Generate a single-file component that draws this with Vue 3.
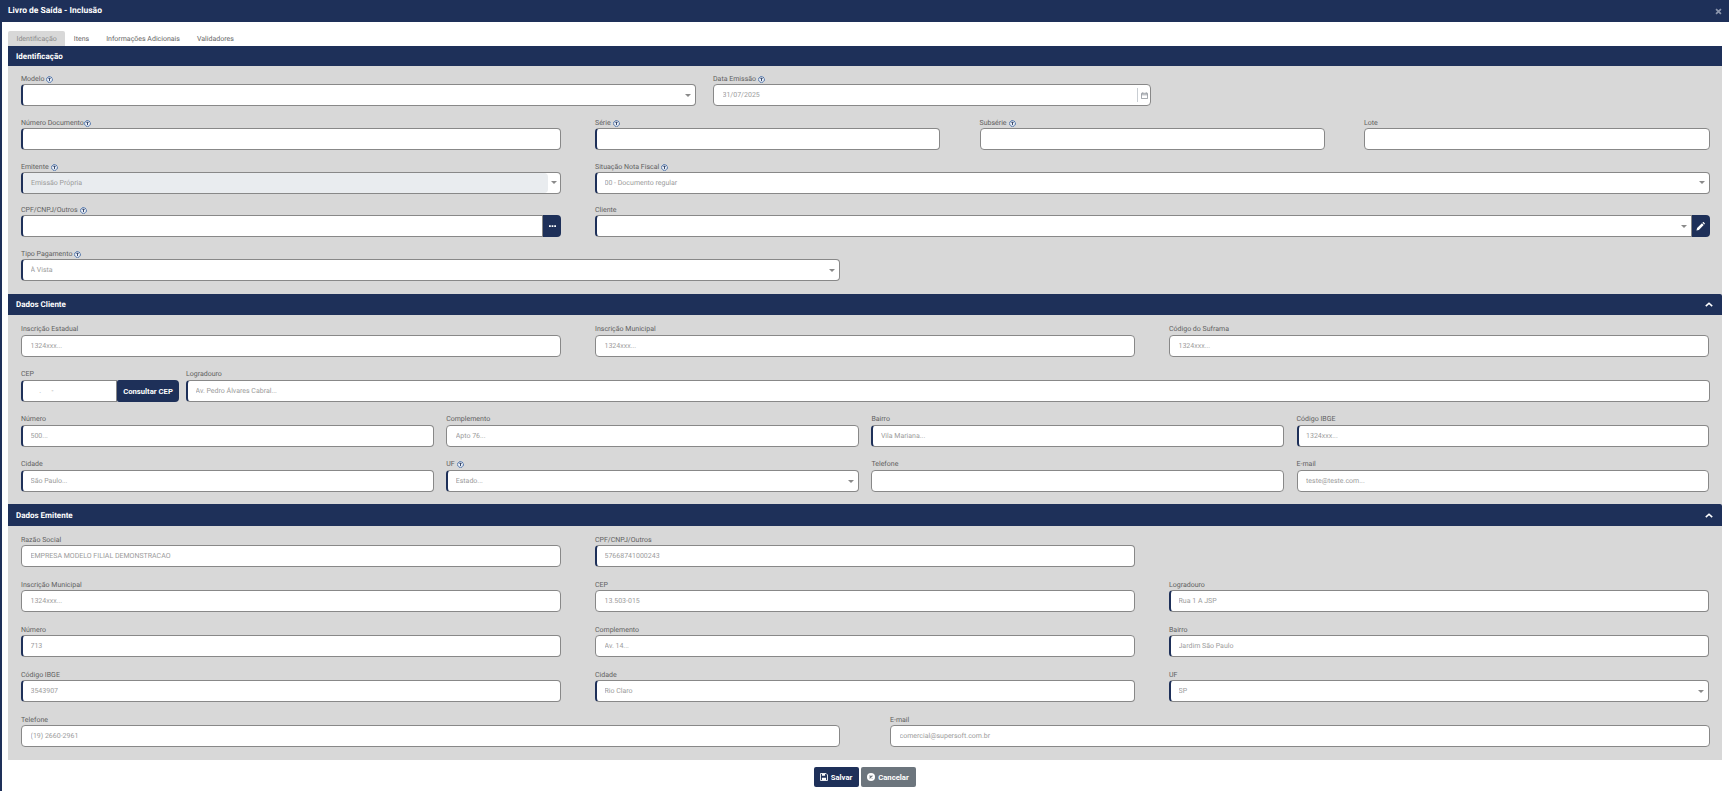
<script setup>
const f = (label, opts = {}) => ({ label, ...opts })
const sections = [
  {
    title: 'Identificação', cls: 'sec-a', collapsible: false,
    rows: [
      { cls: 'r-model', fields: [
        f('Modelo', { info: true, accent: true, kind: 'select' }),
        f('Data Emissão', { info: true, value: '31/07/2025', kind: 'date' })
      ] },
      { cls: 'r-doc', fields: [
        f('Número Documento', { info: true, tight: true, accent: true }),
        f('Série', { info: true, accent: true }),
        f('Subsérie', { info: true }),
        f('Lote')
      ] },
      { cls: 'r-wide', fields: [
        f('Emitente', { info: true, accent: true, kind: 'select', disabled: true, value: 'Emissão Própria' }),
        f('Situação Nota Fiscal', { info: true, accent: true, kind: 'select', value: '00 - Documento regular' })
      ] },
      { cls: 'r-wide', fields: [
        f('CPF/CNPJ/Outros', { info: true, accent: true, addon: 'dots' }),
        f('Cliente', { accent: true, kind: 'select', addon: 'pencil' })
      ] },
      { cls: 'r-half', fields: [
        f('Tipo Pagamento', { info: true, accent: true, kind: 'select', value: 'À Vista' })
      ] }
    ]
  },
  {
    title: 'Dados Cliente', cls: 'sec-b', collapsible: true,
    rows: [
      { cls: 'r-3', fields: [
        f('Inscrição Estadual', { value: '1324xxx...' }),
        f('Inscrição Municipal', { value: '1324xxx...' }),
        f('Código do Suframa', { value: '1324xxx...' })
      ] },
      { cls: 'r-cep', fields: [
        f('CEP', { value: '     .      -', accent: true, addon: 'cep' }),
        f('Logradouro', { accent: true, value: 'Av. Pedro Álvares Cabral...' })
      ] },
      { cls: 'r-4', fields: [
        f('Número', { accent: true, value: '500...' }),
        f('Complemento', { value: 'Apto 76...' }),
        f('Bairro', { accent: true, value: 'Vila Mariana...' }),
        f('Código IBGE', { accent: true, value: '1324xxx...' })
      ] },
      { cls: 'r-4', fields: [
        f('Cidade', { accent: true, value: 'São Paulo...' }),
        f('UF', { info: true, accent: true, kind: 'select', value: 'Estado...' }),
        f('Telefone'),
        f('E-mail', { value: 'teste@teste.com...' })
      ] }
    ]
  },
  {
    title: 'Dados Emitente', cls: 'sec-c', collapsible: true,
    rows: [
      { cls: 'r-3', fields: [
        f('Razão Social', { value: 'EMPRESA MODELO FILIAL DEMONSTRACAO' }),
        f('CPF/CNPJ/Outros', { accent: true, value: '57668741000243' })
      ] },
      { cls: 'r-3', fields: [
        f('Inscrição Municipal', { value: '1324xxx...' }),
        f('CEP', { value: '13.503-015' }),
        f('Logradouro', { accent: true, value: 'Rua 1 A JSP' })
      ] },
      { cls: 'r-3', fields: [
        f('Número', { accent: true, value: '713' }),
        f('Complemento', { value: 'Av. 14...' }),
        f('Bairro', { accent: true, value: 'Jardim São Paulo' })
      ] },
      { cls: 'r-3', fields: [
        f('Código IBGE', { accent: true, value: '3543907' }),
        f('Cidade', { accent: true, value: 'Rio Claro' }),
        f('UF', { accent: true, kind: 'select', value: 'SP' })
      ] },
      { cls: 'r-contact', fields: [
        f('Telefone', { value: '(19) 2660-2961' }),
        f('E-mail', { value: 'comercial@supersoft.com.br' })
      ] }
    ]
  }
]
const tabs = ['Identificação', 'Itens', 'Informações Adicionais', 'Validadores']
</script>

<template>
  <div class="modal">
    <header class="title-bar">
      <span class="title">Livro de Saída - Inclusão</span>
      <svg class="close" viewBox="0 0 10 10" width="7" height="7"><path d="M1.5 1.5l7 7M8.5 1.5l-7 7" stroke="#8d97ad" stroke-width="2.4" fill="none"/></svg>
    </header>

    <nav class="tabs">
      <span v-for="(t, i) in tabs" :key="t" class="tab" :class="{ active: i === 0 }">{{ t }}</span>
    </nav>

    <main class="panel">
      <section v-for="s in sections" :key="s.title" :class="s.cls">
        <div class="sec-head" :class="{ round: s.collapsible }">
          <span>{{ s.title }}</span>
          <svg v-if="s.collapsible" class="chev" viewBox="0 0 10 6" width="8" height="5"><path d="M1 5l4-3.6L9 5" stroke="#fff" stroke-width="2" fill="none"/></svg>
        </div>
        <div class="sec-body">
          <div v-for="(r, ri) in s.rows" :key="ri" class="row" :class="r.cls">
            <div v-for="fl in r.fields" :key="fl.label" class="field">
              <label class="lbl">
                {{ fl.label }}<svg v-if="fl.info" class="info" :class="{ tight: fl.tight }" viewBox="0 0 8 8" width="7" height="7"><circle cx="4" cy="4" r="3.3" fill="#eef2f7" stroke="#1f4f96" stroke-width="1" stroke-dasharray="2.2 0.5"/><path d="M2.6 2.6h2.8M4 2.6v3.2" stroke="#1e3059" stroke-width="1" fill="none"/></svg>
              </label>
              <div class="ctl" :class="{ 'has-addon': fl.addon }">
                <div class="box" :class="{ accent: fl.accent, disabled: fl.disabled, closed: fl.addon }">
                  <span class="val" :class="{ fill: fl.disabled }">{{ fl.value }}</span>
                  <span v-if="fl.kind === 'select'" class="caret"></span>
                  <template v-if="fl.kind === 'date'">
                    <span class="sep"></span>
                    <svg class="cal" viewBox="0 0 8 8" width="7" height="7"><path d="M.5 1.5h7v6h-7zM.5 3.2h7M2 .3v1.6M6 .3v1.6" stroke="#8a8f96" stroke-width=".9" fill="none"/></svg>
                  </template>
                </div>
                <button v-if="fl.addon === 'dots'" class="addon narrow" type="button">
                  <svg viewBox="0 0 8 2" width="7" height="2"><path d="M0 0h2v2H0zM3 0h2v2H3zM6 0h2v2H6z" fill="#fff"/></svg>
                </button>
                <button v-if="fl.addon === 'pencil'" class="addon narrow" type="button">
                  <svg viewBox="0 0 10 10" width="9" height="9"><path d="M6.6 1.4l2 2-5.4 5.4-2.7.7.7-2.7zM7.2.8l.5-.5c.3-.3.7-.3 1 0l1 1c.3.3.3.7 0 1l-.5.5z" fill="#fff"/></svg>
                </button>
                <button v-if="fl.addon === 'cep'" class="addon cep" type="button">Consultar CEP</button>
              </div>
            </div>
          </div>
        </div>
      </section>
    </main>

    <footer class="actions">
      <button class="btn save" type="button">
        <svg viewBox="0 0 10 10" width="8" height="8"><path d="M.6.6h7l1.8 1.8v7H.6z" fill="none" stroke="#fff" stroke-width="1.1"/><path d="M2.4 1h4v2.4h-4zM2.4 6h5.2v3H2.4z" fill="#fff"/></svg>
        Salvar
      </button>
      <button class="btn cancel" type="button">
        <svg viewBox="0 0 10 10" width="8" height="8"><circle cx="5" cy="5" r="5" fill="#fff"/><path d="M3.2 3.2l3.6 3.6M6.8 3.2L3.2 6.8" stroke="#6c757d" stroke-width="1.4"/></svg>
        Cancelar
      </button>
    </footer>
  </div>
</template>

<style>
html, body { margin: 0; background: #fff; }
</style>

<style scoped>
.modal {
  width: 1729px;
  height: 791px;
  box-sizing: border-box;
  border-left: 2px solid #1e3059;
  background: #fff;
  font-family: Roboto, "Liberation Sans", sans-serif;
  text-rendering: geometricPrecision;
  overflow: hidden;
}
.title-bar {
  height: 22px;
  margin-left: -2px;
  background: #1e3059;
  display: flex;
  align-items: center;
  justify-content: space-between;
  padding: 0 8px;
  color: #fff;
}
.title { font-size: 8.5px; font-weight: 700; }
.close { margin-right: -1px; }
.tabs {
  height: 24px;
  box-sizing: border-box;
  padding: 9px 0 0 6px;
  display: flex;
}
.tab {
  height: 15px;
  padding: 0 8.5px;
  font-size: 7px;
  line-height: 16px;
  color: #666;
  white-space: nowrap;
}
.tab.active { background: #d8d8d8; color: #8a8a8a; border-radius: 2px 2px 0 0; }
.panel {
  width: 1714px;
  margin-left: 6px;
  background: #d8d8d8;
}
.sec-head {
  height: 20px;
  background: #1e3059;
  color: #fff;
  font-size: 8px;
  font-weight: 700;
  display: flex;
  align-items: center;
  justify-content: space-between;
  padding: 0 9px 0 8px;
}
.sec-head.round { border-radius: 0 2px 0 0; height: 21px; }
.sec-body {
  padding: 7px 12.5px 13px 13px;
  display: flex;
  flex-direction: column;
}
.sec-a .sec-body { row-gap: 10.75px; }
.sec-c .sec-head { height: 22px; }
.sec-b .sec-body { padding-top: 9px; padding-bottom: 12px; row-gap: 12px; }
.sec-c .sec-body { padding-top: 8px; padding-bottom: 13px; row-gap: 12px; }
.row { display: flex; }
.field { min-width: 0; }
.lbl {
  display: flex;
  align-items: center;
  box-sizing: border-box;
  height: 11px;
  font-size: 7px;
  line-height: 11px;
  color: #5f5f5f;
  white-space: pre;
}
.sec-a .lbl { padding-top: 2px; }
.sec-c .lbl { padding-top: 1px; }
.info { margin-left: 2px; flex: none; }
.info.tight { margin-left: 0; }
.ctl { display: flex; height: 22px; }
.box {
  flex: 1;
  min-width: 0;
  box-sizing: border-box;
  height: 22px;
  display: flex;
  align-items: center;
  background: #fff;
  border: 1px solid #888;
  border-radius: 4px;
  padding-left: 8.5px;
  font-size: 7px;
  color: #9b9b9b;
}
.box.accent { border-left: 2px solid #1e3059; padding-left: 7.5px; }
.box.closed { border-radius: 4px 0 0 4px; }
.val { flex: 1; white-space: pre; overflow: hidden; }
.box.disabled { padding-left: 0; padding-right: 0; overflow: hidden; }
.val.fill {
  align-self: stretch;
  display: flex;
  align-items: center;
  padding-left: 8px;
  background: #e9ecef;
  margin-right: 13px;
  border-radius: 0 4px 4px 0;
}
.caret {
  flex: none;
  width: 0;
  height: 0;
  margin-right: 4px;
  border-left: 3px solid transparent;
  border-right: 3px solid transparent;
  border-top: 3px solid #8a8a8a;
}
.box.disabled .caret { margin-left: -10px; margin-right: 3px; }
.sep { width: 1px; align-self: stretch; margin: 3px 0; background: #c9ced3; }
.cal { margin: 0 2px 0 3px; }
.addon {
  flex: none;
  border: 0;
  padding: 0;
  background: #1e3059;
  color: #fff;
  border-radius: 0 4px 4px 0;
  display: flex;
  align-items: center;
  justify-content: center;
}
.addon.narrow { width: 18px; }
.addon.cep {
  width: 62px;
  border-radius: 2px 4px 4px 2px;
  font: 700 7.7px Roboto, "Liberation Sans", sans-serif;
  white-space: nowrap;
}

.r-model .field:nth-child(1) { width: 675px; margin-right: 17px; }
.r-model .field:nth-child(2) { width: 438px; }
.r-doc .field:nth-child(1) { width: 540px; margin-right: 34px; }
.r-doc .field:nth-child(2), .r-doc .field:nth-child(3) { width: 345px; margin-right: 39.5px; }
.r-doc .field:nth-child(4) { flex: 1; }
.r-wide .field:nth-child(1) { width: 540px; margin-right: 34px; }
.r-wide .field:nth-child(2) { flex: 1; }
.r-half .field { width: 819px; }
.r-3 { column-gap: 34.5px; }
.r-3 .field { width: 539.5px; }
.r-cep { column-gap: 7px; }
.r-cep .field:nth-child(1) { width: 158px; }
.r-cep .field:nth-child(2) { flex: 1; }
.r-4 { column-gap: 12.4px; }
.r-4 .field { width: 412.8px; }
.r-contact { column-gap: 50px; }
.r-contact .field:nth-child(1) { width: 819px; }
.r-contact .field:nth-child(2) { flex: 1; }

.actions {
  display: flex;
  justify-content: center;
  gap: 2px;
  padding: 7px 0 0;
  margin-left: -2px;
}
.btn {
  height: 20px;
  border: 0;
  border-radius: 2px;
  color: #fff;
  font: 700 7.7px Roboto, "Liberation Sans", sans-serif;
  display: flex;
  align-items: center;
  justify-content: center;
  gap: 3px;
  padding: 0;
}
.save { width: 45px; background: #1e3059; }
.cancel { width: 55px; background: #6c757d; }
</style>
